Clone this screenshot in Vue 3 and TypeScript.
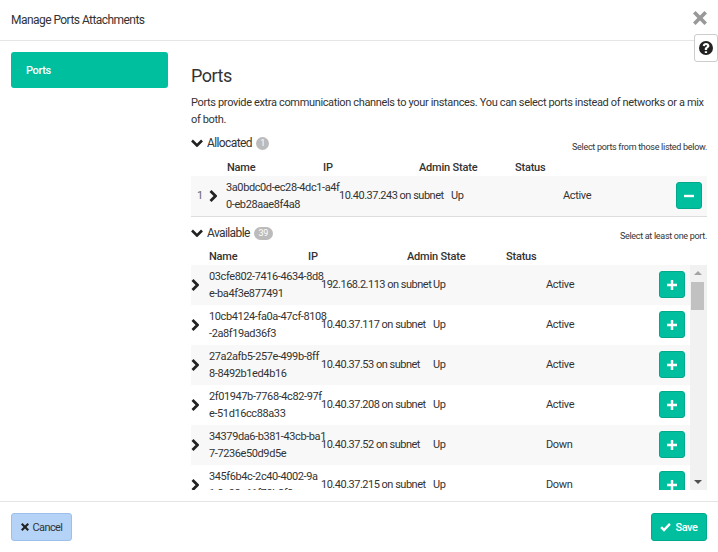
<script setup lang="ts">
interface Port { id1: string; id2: string; ip: string; status: string }
const available: Port[] = [
  { id1: '03cfe802-7416-4634-8d8', id2: 'e-ba4f3e877491', ip: '192.168.2.113 on subnet', status: 'Active' },
  { id1: '10cb4124-fa0a-47cf-8108', id2: '-2a8f19ad36f3', ip: '10.40.37.117 on subnet', status: 'Active' },
  { id1: '27a2afb5-257e-499b-8ff', id2: '8-8492b1ed4b16', ip: '10.40.37.53 on subnet', status: 'Active' },
  { id1: '2f01947b-7768-4c82-97f', id2: 'e-51d16cc88a33', ip: '10.40.37.208 on subnet', status: 'Active' },
  { id1: '34379da6-b381-43cb-ba1', id2: '7-7236e50d9d5e', ip: '10.40.37.52 on subnet', status: 'Down' },
  { id1: '345f6b4c-2c40-4002-9a', id2: '1-3e98e61f78b2f3', ip: '10.40.37.215 on subnet', status: 'Down' },
]
</script>

<template>
  <div class="modal">
    <header class="head">
      <span class="title">Manage Ports Attachments</span>
      <svg class="close" viewBox="0 0 14 14"><path d="M2.6 0 7 4.400 11.400 0 14 2.600 9.600 7l4.400 4.400-2.600 2.600L7 9.600 2.600 14 0 11.400 4.400 7 0 2.600z" /></svg>
      <button class="help" type="button">
        <svg viewBox="0 0 14 14"><path fill-rule="evenodd" d="M7 0a7 7 0 1 1 0 14A7 7 0 0 1 7 0zM5.800 10.200v1.900h2.300v-1.900zM7 2C5.200 2 4 3 3.700 4.700l2.100.5C6 4.400 6.400 4 7 4c.6 0 1 .3 1 .8 0 .5-.4.8-1 1.200-.8.500-1.200 1-1.200 2v.9h2.300v-.6c0-.5.300-.8.900-1.200.9-.6 1.400-1.200 1.400-2.300C10.400 3.100 9 2 7 2z" /></svg>
      </button>
    </header>

    <div class="body">
      <nav class="nav"><div class="nav-item">Ports</div></nav>

      <main class="content">
        <h3 class="h3">Ports</h3>
        <p class="desc">Ports provide extra communication channels to your instances. You can select ports instead of networks or a mix of both.</p>

        <div class="section-head alloc-head">
          <svg class="chev-down" viewBox="0 0 12 8"><path d="M1 1.500 6 6.500l5-5" /></svg>
          <span class="sec-title">Allocated</span>
          <span class="badge">1</span>
          <span class="hint">Select ports from those listed below.</span>
        </div>
        <div class="cols alloc-cols">
          <span>Name</span><span>IP</span><span>Admin State</span><span>Status</span>
        </div>
        <div class="alloc-row">
          <span class="index">1</span>
          <svg class="chev-right" viewBox="0 0 8 12"><path d="M1.500 1 6.500 6l-5 5" /></svg>
          <span class="name">3a0bdc0d-ec28-4dc1-a4f<br />0-eb28aae8f4a8</span>
          <span class="ip">10.40.37.243 on subnet</span>
          <span>Up</span>
          <span>Active</span>
          <button class="act" type="button">
            <svg viewBox="0 0 10 10"><path d="M0 3.800h10v2.400H0z" /></svg>
          </button>
        </div>

        <div class="section-head avail-head">
          <svg class="chev-down" viewBox="0 0 12 8"><path d="M1 1.500 6 6.500l5-5" /></svg>
          <span class="sec-title">Available</span>
          <span class="badge wide">39</span>
          <span class="hint avail-hint">Select at least one port.</span>
        </div>
        <div class="cols avail-cols">
          <span>Name</span><span>IP</span><span>Admin State</span><span>Status</span>
        </div>
        <div class="scroller">
          <div class="list">
            <div v-for="p in available" :key="p.id1" class="avail-row">
              <svg class="chev-right" viewBox="0 0 8 12"><path d="M1.500 1 6.500 6l-5 5" /></svg>
              <span class="name">{{ p.id1 }}<br />{{ p.id2 }}</span>
              <span class="ip">{{ p.ip }}</span>
              <span>Up</span>
              <span>{{ p.status }}</span>
              <button class="act" type="button">
                <svg viewBox="0 0 10 10"><path d="M3.800 0h2.400v3.800H10v2.400H6.200V10H3.800V6.200H0V3.800h3.800z" /></svg>
              </button>
            </div>
          </div>
          <div class="bar">
            <i class="arrow up"></i>
            <i class="thumb"></i>
            <i class="arrow down"></i>
          </div>
        </div>
      </main>
    </div>

    <footer class="foot">
      <button class="btn cancel" type="button">
        <svg viewBox="0 0 14 14"><path d="M2.600 0 7 4.400 11.400 0 14 2.600 9.600 7l4.400 4.400-2.600 2.600L7 9.600 2.600 14 0 11.400 4.400 7 0 2.600z" /></svg>
        Cancel
      </button>
      <button class="btn save" type="button">
        <svg viewBox="0 0 14 12"><path d="M5 11.500 0 6.500l2.300-2.300L5 6.900 11.700 0 14 2.300z" /></svg>
        Save
      </button>
    </footer>
  </div>
</template>

<style scoped>
.modal {
  width: 718px;
  height: 552px;
  display: flex;
  flex-direction: column;
  background: #fff;
  font-family: Roboto, "Liberation Sans", sans-serif;
  font-size: 11px;
  letter-spacing: -0.35px;
  color: #333;
  overflow: hidden;
  position: relative;
}
.head {
  height: 41px;
  box-sizing: border-box;
  flex: none;
  border-bottom: 1px solid #e5e5e5;
  display: flex;
  align-items: center;
  padding-left: 11px;
}
.title { font-size: 12px; letter-spacing: -0.55px; }
.close {
  position: absolute;
  left: 693px;
  top: 11px;
  width: 14px;
  height: 14px;
  fill: #999;
}
.help {
  position: absolute;
  left: 694px;
  top: 34px;
  width: 24px;
  height: 28px;
  padding: 0;
  background: #fff;
  border: 1px solid #ccc;
  border-radius: 3px;
  display: flex;
  align-items: center;
  justify-content: center;
}
.help svg { width: 14px; height: 14px; fill: #222; }
.body {
  flex: 1;
  display: flex;
  min-height: 0;
}
.nav { width: 191px; box-sizing: border-box; flex: none; padding: 11px 23px 0 11px; }
.nav-item {
  height: 36px;
  background: #00bf9f;
  border-radius: 3px;
  color: #fff;
  font-weight: 500;
  padding: 12px 0 0 15px;
  box-sizing: border-box;
  line-height: 14px;
  letter-spacing: -0.4px;
}
.content {
  width: 516px;
  flex: none;
  display: flex;
  flex-direction: column;
}
.h3 {
  margin: 23px 0 0;
  font-size: 18px;
  font-weight: 400;
  line-height: 24px;
  letter-spacing: -0.5px;
}
.desc {
  margin: 6px 0 0;
  line-height: 17px;
  width: 516px;
}
.section-head {
  display: flex;
  align-items: center;
  height: 18px;
}
.alloc-head { margin-top: 6px; }
.avail-head { margin-top: 7px; }
.chev-down {
  width: 12px;
  height: 8px;
  fill: none;
  stroke: #222;
  stroke-width: 2.600;
  margin-right: 4px;
}
.sec-title { font-size: 12px; letter-spacing: -0.6px; }
.badge {
  margin-left: 4px;
  width: 13px;
  height: 13px;
  border-radius: 7px;
  background: #bbb;
  color: #fff;
  font-size: 9px;
  display: flex;
  align-items: center;
  justify-content: center;
}
.badge.wide { width: 19px; }
.hint {
  margin-left: auto;
  font-size: 9px;
  letter-spacing: -0.3px;
  position: relative;
  top: 4px;
}
.avail-hint { top: 3px; }
.cols {
  display: grid;
  height: 16px;
  align-items: center;
  font-weight: 500;
  letter-spacing: -0.2px;
}
.alloc-cols { grid-template-columns: 96px 96px 96px 96px; padding-left: 36px; margin-top: 7px; }
.avail-cols { grid-template-columns: 99px 99px 99px 99px; padding-left: 18px; margin-top: 6px; }
.alloc-row {
  height: 41px;
  box-sizing: border-box;
  background: #f8f8f8;
  border-bottom: 1px solid #ddd;
  display: grid;
  grid-template-columns: 12px 17px 113px 112px 112px 113px 26px;
  padding: 0 0 1px 6px;
  margin-top: 1px;
  align-items: center;
}
.index { color: #666; }
.name { line-height: 17px; white-space: nowrap; letter-spacing: -0.4px; }
.ip { white-space: nowrap; letter-spacing: -0.5px; }
.chev-right {
  width: 8px;
  height: 12px;
  fill: none;
  stroke: #222;
  stroke-width: 2.800;
}
.scroller {
  height: 225px;
  margin-top: 1px;
  overflow: hidden;
  display: flex;
}
.list { width: 499px; flex: none; }
.avail-row {
  height: 40px;
  box-sizing: border-box;
  padding-bottom: 1px;
  display: grid;
  grid-template-columns: 18px 112px 112px 113px 113px 26px;
  align-items: center;
}
.avail-row:nth-child(odd) { background: #f8f8f8; }
.act {
  width: 26px;
  height: 27px;
  padding: 0;
  background: #00bf9f;
  border: 1px solid #00a88c;
  border-radius: 3px;
  display: flex;
  align-items: center;
  justify-content: center;
}
.act svg { width: 10px; height: 10px; fill: #fff; }
.bar {
  width: 17px;
  flex: none;
  background: #f1f1f1;
  position: relative;
}
.thumb {
  position: absolute;
  left: 1px;
  top: 17px;
  width: 13px;
  height: 28px;
  background: #c1c1c1;
}
.arrow {
  position: absolute;
  left: 4px;
  width: 0;
  height: 0;
  border-left: 4px solid transparent;
  border-right: 4px solid transparent;
}
.arrow.up { top: 6px; border-bottom: 4px solid #a3a3a3; }
.arrow.down { bottom: 6px; border-top: 4px solid #505050; }
.foot {
  height: 51px;
  flex: none;
  border-top: 1px solid #e5e5e5;
  display: flex;
  justify-content: space-between;
  padding: 11px 11px 0;
  box-sizing: border-box;
}
.btn {
  height: 28px;
  border-radius: 3px;
  font-family: inherit;
  font-size: 11px;
  display: flex;
  align-items: center;
  justify-content: center;
  gap: 4px;
  padding: 0;
}
.btn svg { width: 8px; height: 8px; }
.cancel {
  width: 61px;
  background: #b5d3f6;
  border: 1px solid #9cc0ea;
  color: #333;
  letter-spacing: -0.6px;
}
.cancel svg { fill: #222; }
.save {
  width: 56px;
  background: #00bf9f;
  border: 1px solid #00a88c;
  color: #fff;
  font-weight: 500;
  letter-spacing: -0.4px;
}
.save svg { fill: #fff; width: 11px; height: 9px; }
</style>
